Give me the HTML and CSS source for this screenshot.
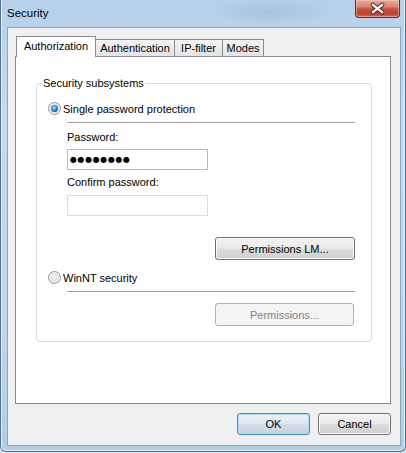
FILE: index.html
```html
<!DOCTYPE html>
<html>
<head>
<meta charset="utf-8">
<title>Security</title>
<link rel="stylesheet" href="styles.css">
</head>
<body>
<div class="window">
  <div class="titlebar">
    <span class="title">Security</span>
    <button class="close" aria-label="Close">
      <svg width="45" height="18" viewBox="0 0 45 18">
        <path d="M17.5 4.5 L27.5 12.5 M27.5 4.5 L17.5 12.5" stroke="#4b2622" stroke-width="4.4" stroke-linecap="round" fill="none"/>
        <path d="M17.5 4.5 L27.5 12.5 M27.5 4.5 L17.5 12.5" stroke="#ffffff" stroke-width="2.4" stroke-linecap="round" fill="none"/>
      </svg>
    </button>
  </div>
  <div class="client">
    <div class="tabs">
      <div class="tab active w-auth">Authorization</div>
      <div class="tab w-authn">Authentication</div>
      <div class="tab w-ip">IP-filter</div>
      <div class="tab w-modes">Modes</div>
    </div>
    <div class="panel">
      <fieldset class="group">
        <legend>Security subsystems</legend>
        <div class="radio-row"><span class="radio checked"></span><span>Single password protection</span></div>
        <div class="sub">
          <div class="sep"></div>
          <div class="field-label first">Password:</div>
          <div class="input focus"><span class="dots">●●●●●●●●</span></div>
          <div class="field-label">Confirm password:</div>
          <div class="input plain"></div>
          <div class="btn-row lm"><button class="btn wide">Permissions LM...</button></div>
        </div>
        <div class="radio-row second"><span class="radio"></span><span>WinNT security</span></div>
        <div class="sub">
          <div class="sep"></div>
          <div class="btn-row perm"><button class="btn narrow" disabled>Permissions...</button></div>
        </div>
      </fieldset>
    </div>
    <div class="footer">
      <button class="btn default">OK</button>
      <button class="btn">Cancel</button>
    </div>
  </div>
</div>
</body>
</html>
```
FILE: styles.css
```css
* { box-sizing: border-box; }
html, body { margin: 0; padding: 0; }
body {
  width: 406px;
  height: 453px;
  overflow: hidden;
  background: #dde5ee;
  font-family: "Liberation Sans", Arial, sans-serif;
  font-size: 11px;
  color: #000;
}
.window {
  width: 406px;
  height: 452px;
  display: flex;
  flex-direction: column;
  padding: 0 4px 0 6px;
  background:
    radial-gradient(ellipse 60px 14px at 270px 12px, rgba(120,150,185,0.25), transparent),
    linear-gradient(180deg, #b6d0eb 0%, #c4dbf1 25%, #bfd7ef 70%, #b2cce8 100%);
  border: 1px solid #52708f;
  border-top: none;
  border-radius: 0 0 6px 6px;
  box-shadow: inset 1px 0 0 #e6f1fc, inset -1px 0 0 #e6f1fc, inset 0 -1px 0 #e6f1fc;
}
.titlebar {
  height: 27px;
  display: flex;
  align-items: flex-start;
}
.title {
  font-size: 11.5px;
  line-height: 26px;
}
.close {
  margin-left: auto;
  margin-right: 1px;
  width: 45px;
  height: 18px;
  padding: 0;
  border: 1px solid #6b2b24;
  border-top: none;
  border-radius: 0 0 4px 4px;
  background: linear-gradient(180deg, #e9a99b 0%, #d88472 40%, #c8523f 52%, #c2402f 80%, #d06a55 100%);
  box-shadow: inset 0 0 0 1px rgba(255,220,210,0.45);
  display: flex;
}
.client {
  height: 419px;
  background: #f0f0f0;
  border: 1px solid #8ea4bc;
  display: flex;
  flex-direction: column;
  padding: 8px 0 0 7px;
}
.tabs {
  display: flex;
  align-items: flex-end;
  height: 20px;
  padding-left: 1px;
  position: relative;
  z-index: 1;
}
.tab {
  height: 17px;
  border: 1px solid #898c95;
  border-bottom: none;
  background: linear-gradient(180deg, #f3f3f3, #e4e4e4);
  text-align: center;
  line-height: 16px;
  margin-left: -1px;
}
.tab.active {
  height: 21px;
  margin-left: 0;
  margin-bottom: -1px;
  background: #fff;
  line-height: 19px;
  position: relative;
  z-index: 2;
}
.w-auth { width: 80px; }
.w-authn { width: 80px; }
.w-ip { width: 49px; }
.w-modes { width: 42px; }
.panel {
  width: 376px;
  height: 348px;
  background: #fff;
  border: 1px solid #898c95;
  padding: 0 19px 0 20px;
}
.group {
  margin: 20px 0 0 0;
  width: 336px;
  border: 1px solid #d5dfe5;
  border-radius: 3px;
  padding: 0 0 15px 11px;
  min-width: 0;
}
.group legend {
  padding: 0 1px;
  margin-left: -6px;
  line-height: 13px;
}
.radio-row {
  display: flex;
  align-items: center;
  gap: 2px;
  height: 15px;
  margin-top: 11px;
}
.radio-row.second { margin-top: 10px; }
.radio {
  width: 13px;
  height: 13px;
  border-radius: 50%;
  border: 1px solid #8f9397;
  background: radial-gradient(circle at 50% 45%, #f4f4f4 0, #e2e2e2 55%, #cfd0d1 100%);
  box-shadow: inset 0 0 0 1px #f6f6f6;
  display: inline-flex;
  align-items: center;
  justify-content: center;
}
.radio.checked::after {
  content: "";
  width: 7px;
  height: 7px;
  border-radius: 50%;
  background: radial-gradient(circle at 45% 40%, #b6ecff 0, #3da0e2 35%, #1b5e9b 70%, #0d355e 100%);
}
.sub {
  margin-left: 19px;
  width: 288px;
}
.sep {
  height: 1px;
  background: #a0a0a0;
  margin-top: 6px;
}
.field-label {
  line-height: 15px;
  margin-top: 5px;
}
.field-label.first { margin-top: 7px; }
.input {
  width: 141px;
  height: 21px;
  margin-top: 4px;
  background: #fff;
  border: 1px solid #dadada;
  padding-left: 2px;
  display: flex;
  align-items: center;
}
.input.focus { border-color: #a5c1dc; }
.input.plain { border-color: #dcdcdc; margin-top: 5px; }
.dots {
  font-family: "DejaVu Sans", sans-serif;
  font-size: 8px;
  letter-spacing: 0.6px;
  color: #000;
}
.btn-row { display: flex; padding-left: 148px; }
.btn-row.lm { margin-top: 21px; }
.btn-row.perm { margin-top: 11px; }
.btn {
  font: inherit;
  color: #000;
  height: 23px;
  padding: 0;
  border: 1px solid #707070;
  border-radius: 3px;
  background: linear-gradient(180deg, #f2f2f2 0%, #ebebeb 48%, #dddddd 52%, #cfcfcf 100%);
  box-shadow: inset 0 0 0 1px #fbfbfb;
}
.btn.wide { width: 141px; }
.btn.narrow { width: 139px; }
.btn:disabled {
  border-color: #adb2b5;
  background: #f4f4f4;
  color: #838383;
  box-shadow: none;
}
.footer {
  display: flex;
  justify-content: flex-end;
  gap: 8px;
  padding: 9px 9px 0 0;
}
.footer .btn { width: 73px; height: 22px; }
.btn.default {
  border-color: #3c8fd0;
  box-shadow: inset 0 0 0 1px #a8def8;
  background: linear-gradient(180deg, #eaf1f7 0%, #e1e9f0 48%, #d2dde7 52%, #c5d3df 100%);
}
```
